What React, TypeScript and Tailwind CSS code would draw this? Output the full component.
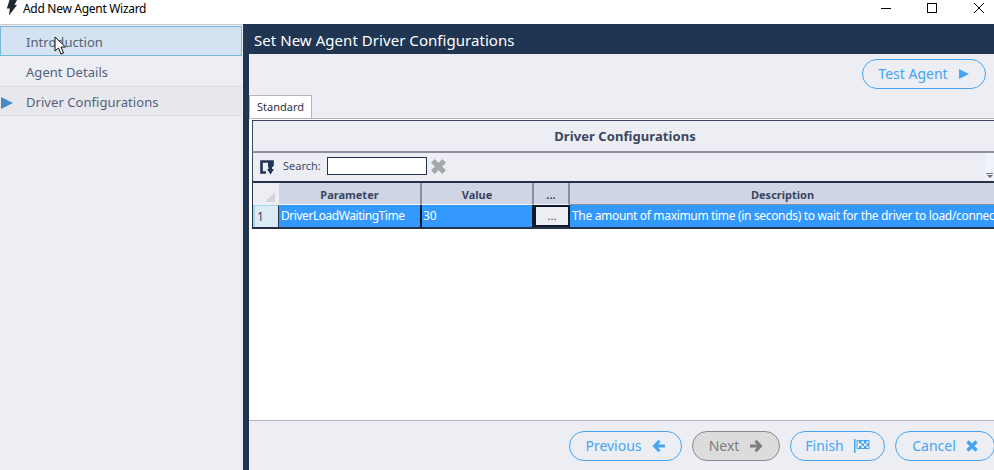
import React from "react";

const font = { fontFamily: '"Noto Sans", "Open Sans", sans-serif' };

function Pill({ label, w, disabled, icon }: { label: string; w: string; disabled?: boolean; icon: React.ReactNode }) {
  return (
    <div className={`${w} h-[30px] shrink-0 rounded-[15px] border flex items-center justify-center gap-[10px] text-[14px] ${disabled ? "border-[#8b8b8b] bg-[#dcdcdc] text-[#7d7d7d]" : "border-[#45a5f5] text-[#45a5f5]"}`}>
      <span className="mt-[-2px]">{label}</span>
      {icon}
    </div>
  );
}

function ArrowLeft() {
  return (
    <svg width="14" height="14" viewBox="0 0 14 14" fill="none" stroke="currentColor" strokeWidth="3" className="mt-[-1px]">
      <path d="M13 7H3M7.5 1.8L2.5 7l5 5.2" />
    </svg>
  );
}
function ArrowRight() {
  return (
    <svg width="14" height="14" viewBox="0 0 14 14" fill="none" stroke="currentColor" strokeWidth="3" className="mt-[-1px]">
      <path d="M1 7h10M6.5 1.8l5 5.2-5 5.2" />
    </svg>
  );
}
function Cross({ size = 12, color = "currentColor", sw = 3.4 }: { size?: number; color?: string; sw?: number }) {
  return (
    <svg width={size} height={size} viewBox="0 0 12 12" fill="none" stroke={color} strokeWidth={sw}>
      <path d="M1.5 1.5l9 9M10.5 1.5l-9 9" />
    </svg>
  );
}
function Flag() {
  return (
    <svg width="16" height="14" viewBox="0 0 16 14" fill="currentColor" className="mt-[-1px]">
      <rect x="0" y="0" width="1.5" height="14" />
      <path d="M3 1.5h12v8H3z" fill="none" stroke="currentColor" strokeWidth="1" />
      <rect x="5" y="2" width="2.5" height="2.5" />
      <rect x="10" y="2" width="2.5" height="2.5" />
      <rect x="7.5" y="4.5" width="2.5" height="2.5" />
      <rect x="12.5" y="4.5" width="2.5" height="2.5" />
      <rect x="5" y="7" width="2.5" height="2.5" />
      <rect x="10" y="7" width="2.5" height="2.5" />
    </svg>
  );
}

export default function App() {
  return (
    <div className="relative w-[994px] h-[470px] overflow-hidden bg-white flex flex-col text-[#3f4a63]" style={font}>
      {/* Title bar */}
      <div className="h-[24px] shrink-0 bg-white flex items-center text-black">
        <svg className="ml-[6px] mt-[-9px]" width="11" height="16" viewBox="0 0 11 16" fill="#1f2733">
          <path d="M3.5 0H11L8.5 5H11L3 15.5l.8-7H.8z" />
        </svg>
        <span className="ml-[6px] text-[12px] mt-[-7px] tracking-[-0.3px]">Add New Agent Wizard</span>
        <div className="ml-auto flex items-center mt-[-8px]">
          <svg width="12" height="12" viewBox="0 0 12 12" className="mr-[34px]" stroke="#000" fill="none"><path d="M1 6.5h10" /></svg>
          <svg width="12" height="12" viewBox="0 0 12 12" className="mr-[35px]" stroke="#000" fill="none"><rect x="1.5" y="1.5" width="9" height="9" /></svg>
          <svg width="12" height="12" viewBox="0 0 12 12" className="mr-[9px]" stroke="#000" fill="none"><path d="M1 1l10 10M11 1L1 11" /></svg>
        </div>
      </div>

      <div className="flex-1 flex min-h-0">
        {/* Sidebar */}
        <div className="w-[243px] shrink-0 bg-[#eceef4] border-t border-[#c9cbd0] pt-px text-[13px] tracking-[0.05px]">
          <div className="h-[30px] w-[242px] bg-[#d3e3f1] border border-[#79b6dc] flex items-center pl-[25px] pt-[3px] text-[#55607a]">Introduction</div>
          <div className="h-[30px] w-[242px] flex items-center pl-[26px] pt-[3px] text-[#55607a]">Agent Details</div>
          <div className="h-[30px] w-[242px] bg-[#e7e8ed] border-y border-[#d9dadf] flex items-center pt-[3px] text-[#55607a]">
            <svg width="13" height="14" viewBox="0 0 13 14" className="ml-px" fill="#4a88c0"><path d="M0 1l12 6-12 6z" /></svg>
            <span className="ml-[12px]">Driver Configurations</span>
          </div>
        </div>

        {/* Main */}
        <div className="flex-1 min-w-0 flex flex-col border-l-[6px] border-[#1f3552] bg-[#eceef4]">
          <div className="h-[30px] shrink-0 bg-[#1f3552] text-white text-[15px] tracking-[0.05px] flex items-center pl-[5px] pt-[2px]">Set New Agent Driver Configurations</div>

          <div className="h-[39px] shrink-0 flex items-start justify-end pt-[5px] pr-[8px]">
            <Pill label="Test Agent" w="w-[124px]" icon={
              <svg width="12" height="12" viewBox="0 0 12 12" fill="currentColor" className="mt-[-1px]"><path d="M1 1l10 5-10 5z" /></svg>
            } />
          </div>

          {/* Tab */}
          <div className="h-[25px] shrink-0 flex items-end pl-0">
            <div className="w-[63px] h-[23px] bg-white border border-b-0 border-[#b4b6bc] text-[11px] text-[#2c3446] flex items-center justify-center">Standard</div>
          </div>

          {/* Panel */}
          <div className="flex-1 min-h-0 bg-white flex flex-col border-t border-[#b4b6bc] pt-[1px] pl-[3px]">
            <div className="h-[31px] shrink-0 bg-[#eceef4] border-l border-t border-[#3b4560] flex items-center justify-center pt-[2px] pl-[3px] text-[13px] font-bold tracking-[0.07px] text-[#3b4560]">
              Driver Configurations
            </div>
            <div className="h-[32px] shrink-0 bg-[#eceef4] border-l border-[#3b4560] border-t-2 border-t-[#8f8f9e] border-b-2 border-b-[#27324a] flex items-center relative">
              <svg className="ml-[7px]" width="15" height="15" viewBox="0 0 15 15" fill="none">
                <path d="M12.5 6V1.5h-11v11H6" fill="none" stroke="#1f3552" strokeWidth="2.6" />
                <path d="M8 1.5h5V7H8z" fill="#1f3552" />
                <path d="M7 9h1.5V6h3.5v3h2l-3.5 5.5z" fill="#1f3552" />
              </svg>
              <span className="ml-[8px] mt-[-2px] text-[11px] text-[#3f4a63]">Search:</span>
              <div className="ml-[6px] mt-[-2px] w-[100px] h-[18px] bg-white border border-[#1f3552]" />
              <div className="ml-[4px] mt-[-2px]"><Cross size={15} color="#a5a7ad" sw={4} /></div>
              <div className="absolute right-0 top-0 h-full w-[9px] bg-[#f0f3fa] flex flex-col items-center justify-end pb-[3px]">
                <div className="w-[7px] h-px bg-[#6a6f7c] mb-px" />
                <div className="w-0 h-0 border-x-[3px] border-x-transparent border-t-[3px] border-t-[#6a6f7c]" />
              </div>
            </div>

            {/* Grid */}
            <div className="grid grid-cols-[26px_143px_112px_36px_1fr] grid-rows-[22px_22px] shrink-0 border-l border-b-2 border-[#27324a] border-l-[#27324a] text-[11px] -mr-[80px]">
              <div className="bg-[#eceef4] relative border-r border-[#eceef4]">
                <div className="absolute right-[3px] bottom-[3px] w-0 h-0 border-l-[10px] border-l-transparent border-b-[10px] border-b-[#d3d5da]" />
              </div>
              <div className="bg-[#cfd5e4] border-r-2 border-[#8a8f9f] font-bold text-[#3b4560] flex items-center justify-center pt-[3px] border-b border-b-[#f4f5f9]">Parameter</div>
              <div className="bg-[#cfd5e4] border-r-2 border-[#8a8f9f] font-bold text-[#3b4560] flex items-center justify-center pt-[3px] border-b border-b-[#f4f5f9]">Value</div>
              <div className="bg-[#cfd5e4] border-r-2 border-[#8a8f9f] font-bold text-[#3b4560] flex items-center justify-center pt-[3px] border-b border-b-[#f4f5f9]">...</div>
              <div className="bg-[#cfd5e4] font-bold text-[#3b4560] border-b border-b-[#8a8f9f] flex items-center pl-[181px] pt-[3px]">Description</div>

              <div className="bg-[#dcecf7] border-r border-[#27324a] flex items-center text-[#3b4560] text-[12px] pl-[2px] border-l-2 border-l-[#a9d6f2] border-t border-t-[#a9d6f2]">1</div>
              <div className="bg-[#3399ff] border-r-2 border-[#111b2e] text-white text-[12px] tracking-[-0.45px] flex items-center pl-[2px] whitespace-nowrap">DriverLoadWaitingTime</div>
              <div className="bg-[#3399ff] border-r-2 border-[#111b2e] text-white text-[12px] flex items-center pl-[1px]">30</div>
              <div className="bg-[#eceef4] border-2 border-[#111b2e] text-[#3b4560] flex items-center justify-center">...</div>
              <div className="bg-[#3399ff] text-white text-[12px] tracking-[-0.33px] flex items-center pl-[2px] whitespace-nowrap overflow-hidden">The amount of maximum time (in seconds) to wait for the driver to load/connect to the data source</div>
            </div>

            <div className="flex-1" />
            <div className="h-px bg-[#b4b6bc] shrink-0 -ml-[3px]" />
            <div className="h-[49px] -ml-[3px] shrink-0 bg-[#eceef4] flex items-start pt-[10px] pl-[320px] gap-[10px] w-[800px]">
              <Pill label="Previous" w="w-[113px]" icon={<ArrowLeft />} />
              <Pill label="Next" w="w-[88px]" disabled icon={<ArrowRight />} />
              <Pill label="Finish" w="w-[95px]" icon={<Flag />} />
              <Pill label="Cancel" w="w-[100px]" icon={<Cross />} />
            </div>
          </div>
        </div>
      </div>

      {/* Mouse cursor */}
      <svg className="absolute left-[54px] top-[36px]" width="13" height="20" viewBox="0 0 13 20">
        <path d="M1 1v14l3.5-3 2.5 6 2.5-1-2.5-6h4.5z" fill="#fff" stroke="#111" strokeWidth="1" />
      </svg>
    </div>
  );
}
